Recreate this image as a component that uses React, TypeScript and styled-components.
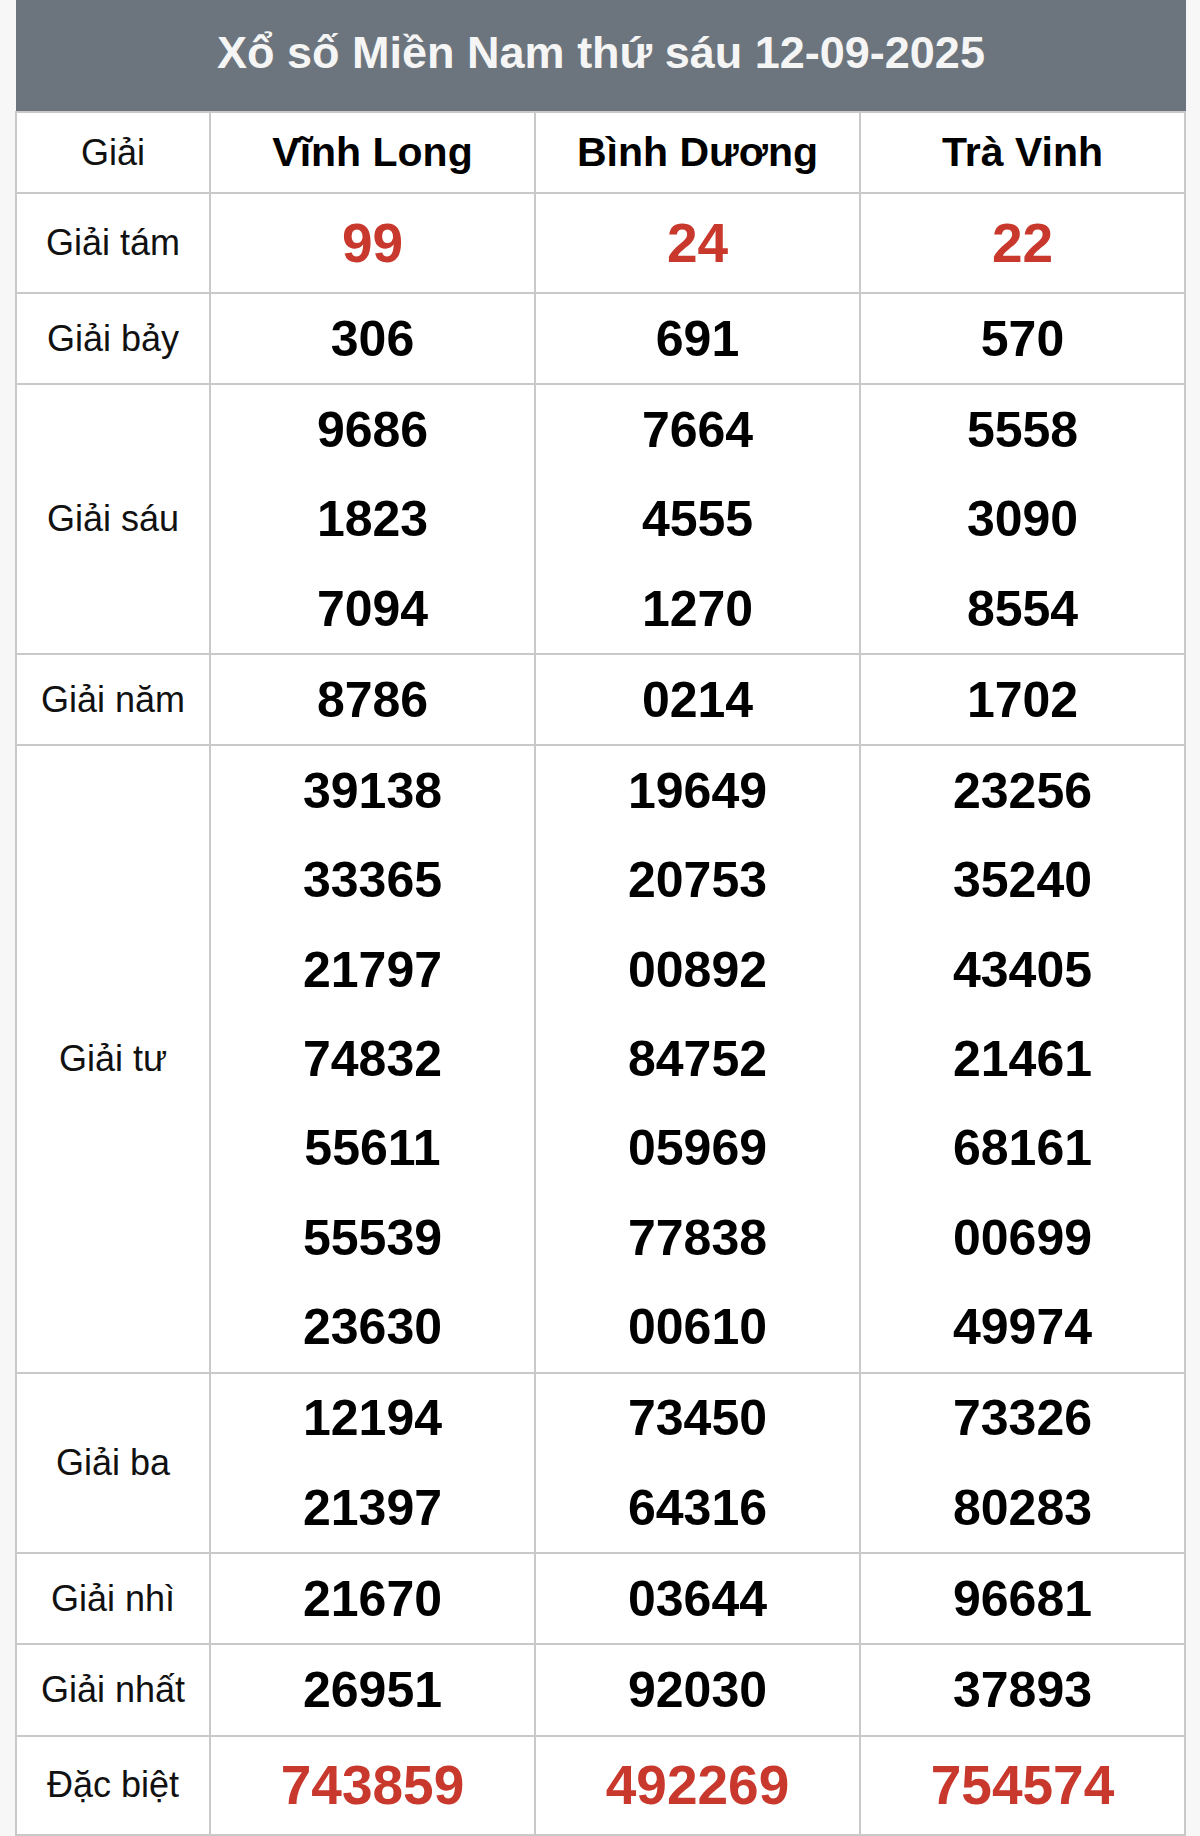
import * as React from "react";
import styled, { createGlobalStyle } from "styled-components";

const GlobalStyle = createGlobalStyle`
body {
  margin: 0;
  background: #f7f7f7;
  font-family: "Liberation Sans", Arial, sans-serif;
  color: #111;
}
`;

const Page = styled.div`
  padding: 0 14px 0 15px;
  width: 1200px;
  box-sizing: border-box;
`;

const Title = styled.h1`
  margin: 0 0 0 1px;
  height: 111px;
  background: #6c757d;
  color: #f5f5f5;
  font-size: 45px;
  font-weight: 700;
  display: flex;
  align-items: center;
  justify-content: center;
  padding-bottom: 6px;
  box-sizing: border-box;
`;

const Grid = styled.div`
  display: grid;
  grid-template-columns: 192px repeat(3, 1fr);
  gap: 2px;
  padding: 2px;
  background: #c9c9c9;
  border-bottom: 3px solid #bcaca0;
`;

const Cell = styled.div<{ $h?: number }>`
  background: #fff;
  display: flex;
  flex-direction: column;
  align-items: center;
  justify-content: center;
  min-height: ${(p) => (p.$h ? `${p.$h}px` : "auto")};
`;

const Label = styled.span`
  font-size: 36px;
  color: #111;
`;

const City = styled.span`
  font-size: 41px;
  font-weight: 700;
  color: #000;
`;

const Num = styled.div<{ $red?: boolean }>`
  height: 89.3px;
  display: flex;
  align-items: center;
  font-weight: 700;
  font-size: ${(p) => (p.$red ? "55px" : "50px")};
  color: ${(p) => (p.$red ? "#c8382c" : "#000")};
`;

const cities = ["Vĩnh Long", "Bình Dương", "Trà Vinh"];

const prizes: { label: string; red?: boolean; h?: number; values: string[][] }[] = [
  { label: "Giải tám", red: true, h: 98, values: [["99"], ["24"], ["22"]] },
  { label: "Giải bảy", values: [["306"], ["691"], ["570"]] },
  {
    label: "Giải sáu",
    values: [
      ["9686", "1823", "7094"],
      ["7664", "4555", "1270"],
      ["5558", "3090", "8554"],
    ],
  },
  { label: "Giải năm", values: [["8786"], ["0214"], ["1702"]] },
  {
    label: "Giải tư",
    values: [
      ["39138", "33365", "21797", "74832", "55611", "55539", "23630"],
      ["19649", "20753", "00892", "84752", "05969", "77838", "00610"],
      ["23256", "35240", "43405", "21461", "68161", "00699", "49974"],
    ],
  },
  {
    label: "Giải ba",
    values: [
      ["12194", "21397"],
      ["73450", "64316"],
      ["73326", "80283"],
    ],
  },
  { label: "Giải nhì", values: [["21670"], ["03644"], ["96681"]] },
  { label: "Giải nhất", values: [["26951"], ["92030"], ["37893"]] },
  { label: "Đặc biệt", red: true, h: 97, values: [["743859"], ["492269"], ["754574"]] },
];

export default function App() {
  return (
    <>
      <GlobalStyle />
      <Page>
        <Title>Xổ số Miền Nam thứ sáu 12-09-2025</Title>
        <Grid>
          <Cell $h={79}>
            <Label>Giải</Label>
          </Cell>
          {cities.map((c) => (
            <Cell key={c} $h={79}>
              <City>{c}</City>
            </Cell>
          ))}
          {prizes.map((p) => (
            <React.Fragment key={p.label}>
              <Cell $h={p.h}>
                <Label>{p.label}</Label>
              </Cell>
              {p.values.map((col, i) => (
                <Cell key={i} $h={p.h}>
                  {col.map((v) => (
                    <Num key={v} $red={p.red}>
                      {v}
                    </Num>
                  ))}
                </Cell>
              ))}
            </React.Fragment>
          ))}
        </Grid>
      </Page>
    </>
  );
}
